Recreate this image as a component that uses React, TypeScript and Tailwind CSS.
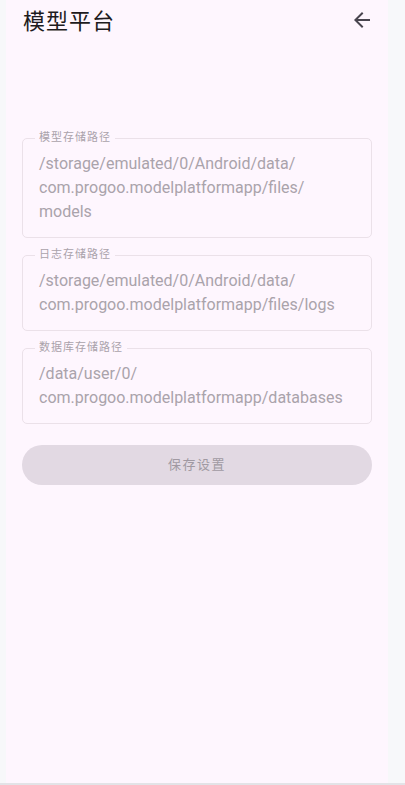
import React from 'react';

type PathField = { label: string; lines: string[] };

const fields: PathField[] = [
  {
    label: '模型存储路径',
    lines: ['/storage/emulated/0/Android/data/', 'com.progoo.modelplatformapp/files/', 'models'],
  },
  {
    label: '日志存储路径',
    lines: ['/storage/emulated/0/Android/data/', 'com.progoo.modelplatformapp/files/logs'],
  },
  {
    label: '数据库存储路径',
    lines: ['/data/user/0/', 'com.progoo.modelplatformapp/databases'],
  },
];

const font = { fontFamily: 'Roboto, "Noto Sans CJK SC", sans-serif' };

const OutlinedField: React.FC<{ field: PathField }> = ({ field }) => (
  <div className="relative rounded-[5px] border border-[#ebe1e9] px-4 py-[13px]">
    {/* floating label cut into the border */}
    <span className="absolute -top-[8px] left-[12px] bg-[#fef6fe] px-[4px] text-[11px] leading-[14px] tracking-[1px] text-[#aaa2ab]">
      {field.label}
    </span>
    {field.lines.map((line, i) => (
      <p key={i} className="text-[16px] leading-[24px] tracking-[0px] text-[#aaa3ab] whitespace-nowrap">
        {line}
      </p>
    ))}
  </div>
);

export default function App() {
  return (
    <div className="flex h-[785px] w-[405px] flex-col bg-[#f7f8fa]" style={font}>
      <div className="flex h-[783px]">
        <div className="w-[6px] shrink-0 bg-[#f7f8fa]" />

        <div className="flex min-w-0 flex-1 flex-col bg-[#fef6fe]">
          {/* Header */}
          <div className="flex h-[42px] items-center justify-between pl-[17px] pr-[14px]">
            <h1 className="text-[22px] tracking-[1px] text-[#1d1b20]">模型平台</h1>
            <svg width="24" height="24" viewBox="0 0 24 24" className="-mt-[2px] text-[#49454f]">
              <path
                fill="currentColor"
                d="M20 11H7.83l5.59-5.59L12 4l-8 8 8 8 1.41-1.41L7.83 13H20v-2z"
              />
            </svg>
          </div>

          {/* Settings form */}
          <div className="mt-[96px] flex flex-col gap-[17px] px-4">
            {fields.map((f) => (
              <OutlinedField key={f.label} field={f} />
            ))}
          </div>

          <div className="mt-[21px] px-4">
            <button
              disabled
              className="flex h-[40px] w-full items-center justify-center rounded-full bg-[#e2d9e3] text-[13px] tracking-[1.5px] text-[#a099a2]"
            >
              保存设置
            </button>
          </div>
        </div>

        <div className="w-[17px] shrink-0 bg-[#f7f8fa]" />
      </div>
      <div className="h-[2px] bg-[#e3e3e7]" />
    </div>
  );
}
